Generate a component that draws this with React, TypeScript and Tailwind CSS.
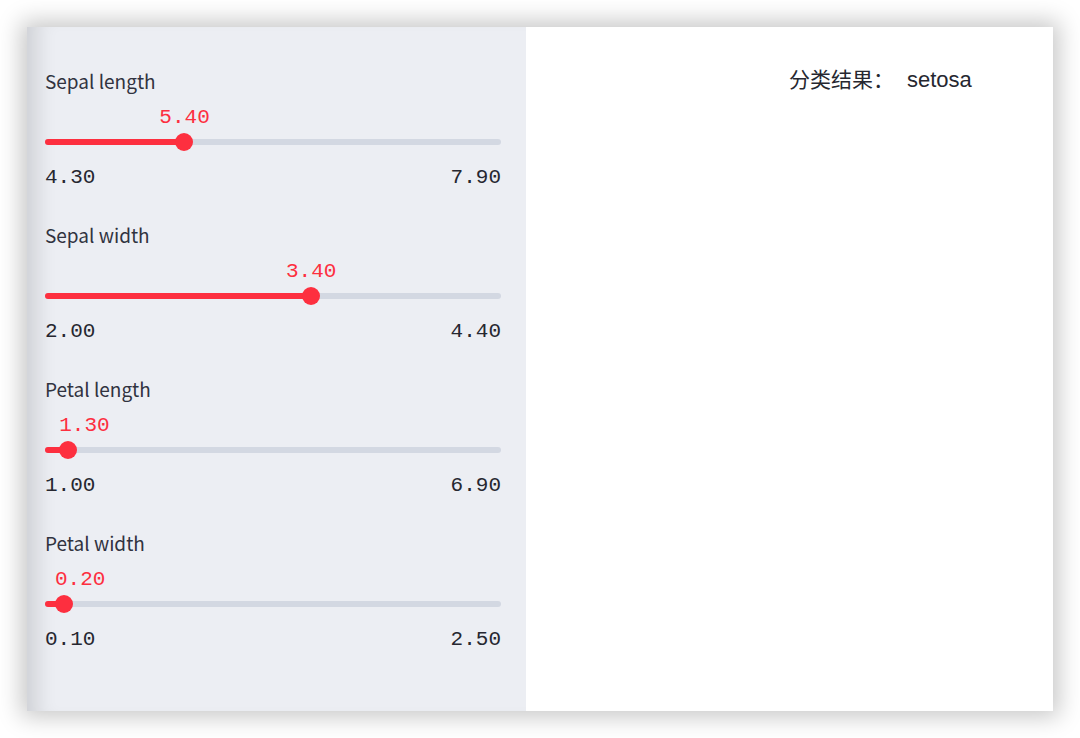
import React from 'react';

interface SliderSpec {
    label: string;
    min: number;
    max: number;
    value: number;
}

const sliders: SliderSpec[] = [
    { label: 'Sepal length', min: 4.3, max: 7.9, value: 5.4 },
    { label: 'Sepal width', min: 2.0, max: 4.4, value: 3.4 },
    { label: 'Petal length', min: 1.0, max: 6.9, value: 1.3 },
    { label: 'Petal width', min: 0.1, max: 2.5, value: 0.2 },
];

const TRACK_W = 456;
const LABEL_W = 50;

const SliderRow: React.FC<{ spec: SliderSpec }> = ({ spec }) => {
    const frac = (spec.value - spec.min) / (spec.max - spec.min);
    const thumbX = frac * TRACK_W;
    // near the left edge the value label is pinned to the thumb's left side
    const labelLeft = thumbX - LABEL_W / 2 < 0 ? thumbX - 9 : thumbX - LABEL_W / 2;

    return (
        <div className="flex flex-col w-[456px]">
            <div className="h-6 leading-6 text-[19px] text-[#31333f]">{spec.label}</div>
            <div className="relative h-[61px]">
                <div
                    className="absolute top-[13px] h-6 leading-6 text-[21px] text-[#fd2f3f] font-['Liberation_Mono',monospace] text-center"
                    style={{ left: labelLeft, width: LABEL_W }}
                >
                    {spec.value.toFixed(2)}
                </div>
                <div className="absolute left-0 right-0 top-[46px] h-[6px] rounded-full bg-[#d3d8e2]" />
                <div
                    className="absolute left-0 top-[46px] h-[6px] rounded-full bg-[#fd2f3f]"
                    style={{ width: thumbX }}
                />
                <div
                    className="absolute top-[40px] w-[18px] h-[18px] rounded-full bg-[#fd2f3f]"
                    style={{ left: thumbX - 9 }}
                />
            </div>
            <div className="flex justify-between h-[48px] leading-[48px] text-[21px] text-[#262730] font-['Liberation_Mono',monospace]">
                <span>{spec.min.toFixed(2)}</span>
                <span>{spec.max.toFixed(2)}</span>
            </div>
        </div>
    );
};

const App: React.FC = () => {
    return (
        <div className="w-[1080px] h-[738px] bg-white p-[27px] font-['Noto_Sans_CJK_SC','Noto_Sans',sans-serif]">
            <div className="flex h-full w-full shadow-[0_0_22px_6px_rgba(0,0,0,0.22)]">
                <aside className="flex flex-col gap-[21px] w-[499px] h-full bg-[#eceef3] pl-[18px] pt-[42px] shadow-[inset_24px_0_20px_-14px_rgba(0,0,0,0.12)]">
                    {sliders.map((s) => (
                        <SliderRow key={s.label} spec={s} />
                    ))}
                </aside>
                <main className="flex-1 h-full bg-white pl-[263px] pt-[39px]">
                    <p className="text-[21px] leading-7 text-[#262730] font-['Liberation_Sans','Noto_Sans_CJK_SC',sans-serif]">
                        分类结果：<span className="ml-[13px] text-[22px]">setosa</span>
                    </p>
                </main>
            </div>
        </div>
    );
};

export default App;
